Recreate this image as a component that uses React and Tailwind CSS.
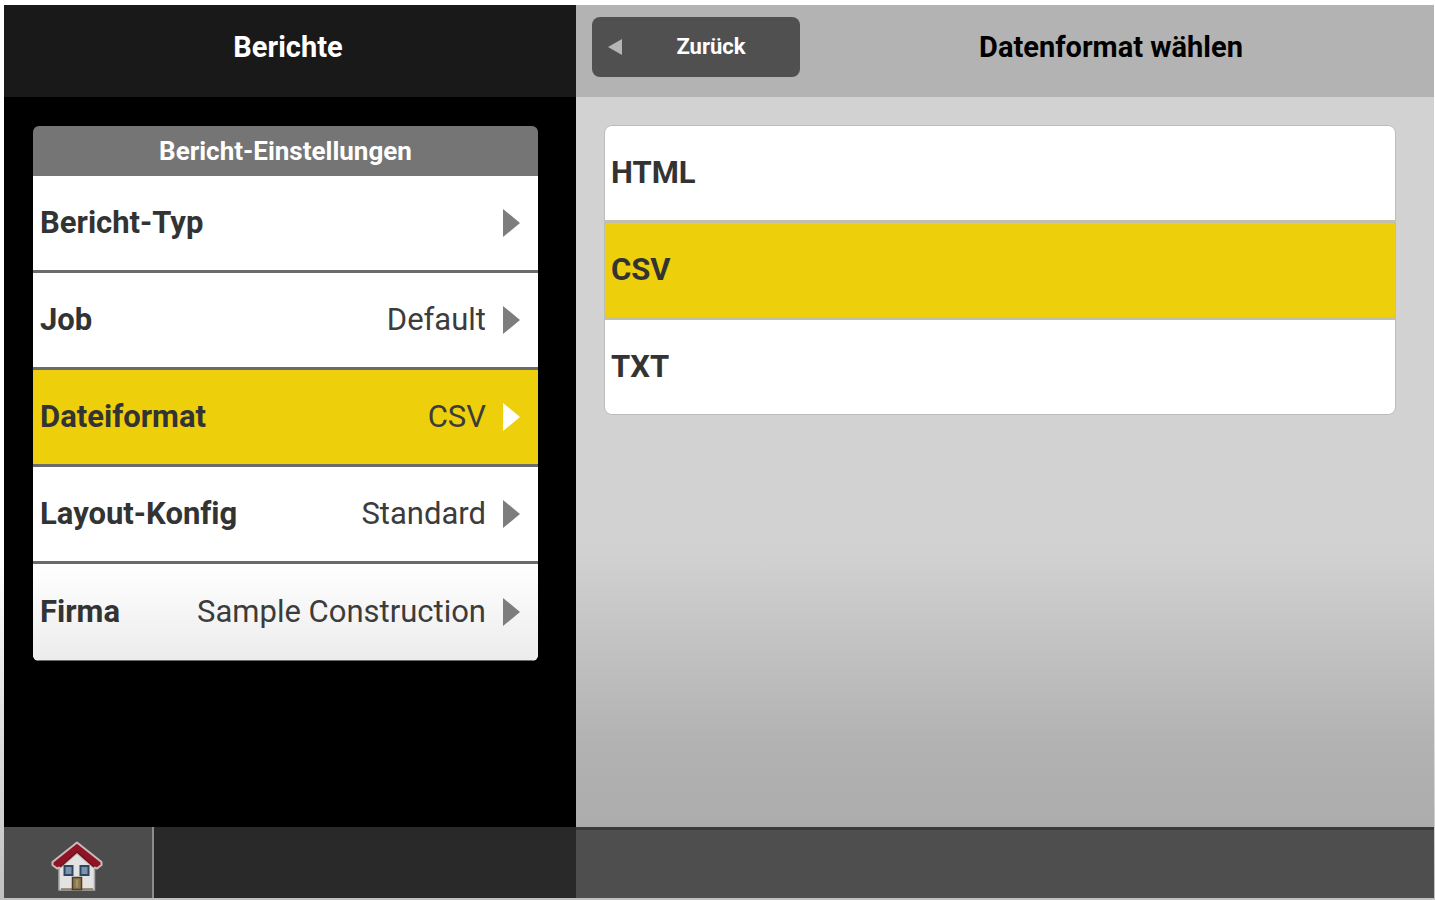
import { useState } from 'react';

const ajustes = [
  { id: 'typ', label: 'Bericht-Typ', value: '' },
  { id: 'job', label: 'Job', value: 'Default' },
  { id: 'format', label: 'Dateiformat', value: 'CSV' },
  { id: 'layout', label: 'Layout-Konfig', value: 'Standard' },
  { id: 'firma', label: 'Firma', value: 'Sample Construction' },
];

const formate = ['HTML', 'CSV', 'TXT'];

function HomeIcon() {
  return (
    <svg viewBox="0 0 52 52" className="w-13 h-13" aria-hidden="true">
      <path d="M8 24 L26 8 L43.5 24 V49 H8 Z" fill="#e2e2e2" stroke="#a9a9a9" strokeWidth="1.5" />
      <path d="M10 48 H42" stroke="#8d7355" strokeWidth="1.5" />
      <path d="M26 1.5 L50.5 21 V24 L46 27.5 L42 26 L26 12 L10 26 L6 27.5 L1.5 24 V21 Z" fill="#8f1526" stroke="#c9bcb8" strokeWidth="2" strokeLinejoin="round" />
      <path d="M9 26 L26 11 L43 26" fill="none" stroke="#6d0c1b" strokeWidth="1.5" />
      <rect x="13.5" y="25" width="8" height="9" fill="#7d93a8" stroke="#2c4764" strokeWidth="2" />
      <rect x="29.5" y="25" width="8" height="9" fill="#7d93a8" stroke="#2c4764" strokeWidth="2" />
      <rect x="21.5" y="36.5" width="9" height="12" fill="#8d7a50" stroke="#4d3b2b" strokeWidth="1.5" />
      <path d="M26 38.5 V46.5" stroke="#a59467" strokeWidth="2" />
    </svg>
  );
}

function SettingRow({ label, value, active, onClick }) {
  return (
    <button
      type="button"
      onClick={onClick}
      aria-pressed={active}
      className={`w-full h-[97px] pl-[7px] pr-[18px] flex items-center text-left border-b-3 border-[#6b6b6b] last:border-b last:bg-linear-to-b last:from-white last:to-[#ececec] ${active ? 'bg-[#eecf0b]' : 'bg-white'}`}
    >
      <span className="font-bold text-[#333]">{label}</span>
      <span className="flex-1 text-right text-[#3c3c3c]">{value}</span>
      <svg viewBox="0 0 18 28" className={`w-[18px] h-7 ml-4 ${active ? 'text-white' : 'text-[#7d7d7d]'}`} aria-hidden="true">
        <path d="M1 0 L18 14 L1 28 Z" fill="currentColor" />
      </svg>
    </button>
  );
}

export default function App() {
  const [seccion, setSeccion] = useState('format');
  const [formato, setFormato] = useState('CSV');

  return (
    <div className="min-h-screen flex flex-col pt-[5px] pl-1 pr-px pb-0.5 bg-linear-to-b from-white from-62% to-[#c0c0c0] font-[Roboto,sans-serif] text-[31px] leading-9 [font-variant-ligatures:none]">
      <div className="flex-1 flex">
        <aside className="w-2/5 bg-black">
          <header className="h-[92px] pr-1 pb-2 flex items-center justify-center bg-[#191919]">
            <h1 className="text-[29px] font-bold text-white">Berichte</h1>
          </header>

          <section className="mt-[29px] ml-[29px] mr-[38px] rounded-md overflow-hidden">
            <h2 className="h-[50px] flex items-center justify-center bg-[#757575] text-[26px] font-bold text-white">
              Bericht-Einstellungen
            </h2>
            {ajustes.map((a) => (
              <SettingRow
                key={a.id}
                label={a.label}
                value={a.id === 'format' ? formato : a.value}
                active={seccion === a.id}
                onClick={() => setSeccion(a.id)}
              />
            ))}
          </section>
        </aside>

        <main className="flex-1 bg-linear-to-b from-[#d2d2d2] from-66% via-[#b2b2b2] via-90% to-[#acacac]">
          <header className="h-[92px] pl-4 pr-3 pb-2 flex items-center bg-[#b3b3b3]">
            <button type="button" className="w-[208px] h-[60px] px-4 flex items-center rounded-lg bg-[#505050] text-[22px] font-bold text-white">
              <svg viewBox="0 0 14 16" className="w-3.5 h-4" aria-hidden="true">
                <path d="M0 8 L14 0 V16 Z" fill="#b5b5b5" />
              </svg>
              <span className="flex-1 text-center pl-4">Zurück</span>
            </button>
            <h2 className="flex-1 text-center text-[29px] font-bold text-black">Datenformat wählen</h2>
          </header>

          <div className="mt-7 ml-7 mr-[38px] rounded-lg overflow-hidden border border-[#bdbdbd]">
            {formate.map((f) => (
              <button
                key={f}
                type="button"
                onClick={() => setFormato(f)}
                aria-pressed={formato === f}
                className={`w-full h-[97px] pl-1.5 flex items-center text-left font-bold text-[#333] border-b-3 border-[#c2bfae] last:h-[94px] last:border-b-0 ${formato === f ? 'bg-[#eecf0b]' : 'bg-white'}`}
              >
                {f}
              </button>
            ))}
          </div>
        </main>
      </div>

      <footer className="h-[71px] flex">
        <div className="w-2/5 flex bg-[#292929]">
          <button type="button" aria-label="Home" className="w-[150px] pr-0.5 flex items-center justify-center pt-2 bg-[#4c4c4c] border-r-2 border-[#8c8c8c]">
            <HomeIcon />
          </button>
        </div>
        <div className="flex-1 bg-[#4e4e4e] border-t-3 border-[#3b3b3b]" />
      </footer>
    </div>
  );
}
